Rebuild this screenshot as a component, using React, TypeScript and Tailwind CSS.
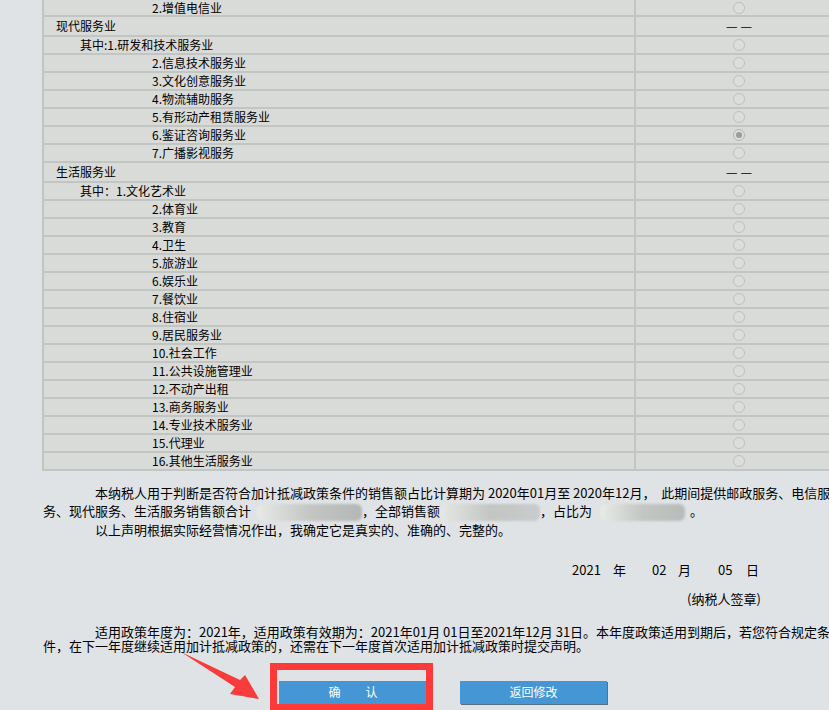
import React from "react";

type Row = { label: string; kind: "first" | "cat" | "sub" | "item"; checked?: boolean };

const rows: Row[] = [
  { label: "2.增值电信业", kind: "first" },
  { label: "现代服务业", kind: "cat" },
  { label: "其中:1.研发和技术服务业", kind: "sub" },
  { label: "2.信息技术服务业", kind: "item" },
  { label: "3.文化创意服务业", kind: "item" },
  { label: "4.物流辅助服务", kind: "item" },
  { label: "5.有形动产租赁服务业", kind: "item" },
  { label: "6.鉴证咨询服务业", kind: "item", checked: true },
  { label: "7.广播影视服务", kind: "item" },
  { label: "生活服务业", kind: "cat" },
  { label: "其中：1.文化艺术业", kind: "sub" },
  { label: "2.体育业", kind: "item" },
  { label: "3.教育", kind: "item" },
  { label: "4.卫生", kind: "item" },
  { label: "5.旅游业", kind: "item" },
  { label: "6.娱乐业", kind: "item" },
  { label: "7.餐饮业", kind: "item" },
  { label: "8.住宿业", kind: "item" },
  { label: "9.居民服务业", kind: "item" },
  { label: "10.社会工作", kind: "item" },
  { label: "11.公共设施管理业", kind: "item" },
  { label: "12.不动产出租", kind: "item" },
  { label: "13.商务服务业", kind: "item" },
  { label: "14.专业技术服务业", kind: "item" },
  { label: "15.代理业", kind: "item" },
  { label: "16.其他生活服务业", kind: "item" },
];

// heights include the 2px bottom rule (border-box)
const heights = { first: "h-[17px]", cat: "h-[20px]", sub: "h-[18px]", item: "h-[18px]" };
const indents = { first: "pl-[108px]", cat: "pl-[12px]", sub: "pl-[36px]", item: "pl-[108px]" };

function Radio({ checked }: { checked?: boolean }) {
  return (
    <span
      className={`flex items-center justify-center w-[12px] h-[12px] rounded-full border bg-[#dcdedb] ${
        checked ? "border-[#b3b4b2]" : "border-[#bfc0be]"
      }`}
    >
      {checked && <span className="w-[6px] h-[6px] rounded-full bg-[#9a9b9a]" />}
    </span>
  );
}

function Blur({ w, from, to }: { w: string; from: string; to: string }) {
  return (
    <span className={`inline-block align-middle h-[17px] ${w} rounded-md blur-[1px] bg-linear-to-r ${from} via-[#c4c6c4] ${to}`} />
  );
}

export default function App() {
  return (
    <div
      className="relative w-[829px] h-[710px] overflow-hidden bg-[#dfe3e6] text-black"
      style={{ fontFamily: '"Noto Sans CJK SC", "Noto Sans", sans-serif' }}
    >
      <div className="w-[900px] pl-[42px]">
        {/* industry table */}
        <div className="w-[800px] border-l-2 border-[#c3c5c2] bg-[#d9dbd8] text-[12px]">
          {rows.map((r) => (
            <div key={r.label} className={`flex border-b-2 border-[#c3c5c2] ${heights[r.kind]}`}>
              <div className={`w-[592px] border-r-2 border-[#c3c5c2] flex items-center leading-none whitespace-nowrap ${indents[r.kind]}`}>
                {r.label}
              </div>
              <div className="flex-1 flex items-center justify-center">
                {r.kind === "cat" ? (
                  <span className="flex gap-[3px] text-[13px] leading-none pb-[2px]">
                    <span>—</span>
                    <span>—</span>
                  </span>
                ) : (
                  <Radio checked={r.checked} />
                )}
              </div>
            </div>
          ))}
        </div>

        {/* declaration */}
        <div className="mt-[13px] text-[13px] leading-[18px] whitespace-nowrap">
          <div className="pl-[53px]">
            本纳税人用于判断是否符合加计抵减政策条件的销售额占比计算期为 2020年01月至 2020年12月，&nbsp;&nbsp;此期间提供邮政服务、电信服务、
          </div>
          <div className="pl-px flex items-center">
            <span>务、现代服务、生活服务销售额合计</span>
            <span className="ml-[6px]"><Blur w="w-[105px]" from="from-[#e7eae7]" to="to-[#b5b7b6]" /></span>
            <span>，全部销售额</span>
            <span><Blur w="w-[100px]" from="from-[#e6e8e5]" to="to-[#c9cbcd]" /></span>
            <span>，占比为</span>
            <span className="ml-[8px]"><Blur w="w-[85px]" from="from-[#e8ebe7]" to="to-[#b9bbb9]" /></span>
            <span className="ml-[5px]">。</span>
          </div>
          <div className="pl-[53px]">以上声明根据实际经营情况作出，我确定它是真实的、准确的、完整的。</div>
        </div>

        {/* date */}
        <div className="mt-[22px] pl-[530px] flex text-[13px] leading-[18px]">
          <span className="w-[41px]">2021</span>
          <span className="w-[39px]">年</span>
          <span className="w-[26px]">02</span>
          <span className="w-[40px]">月</span>
          <span className="w-[28px]">05</span>
          <span>日</span>
        </div>
        <div className="mt-[11px] pl-[645px] text-[13px] leading-[18px]">(纳税人签章)</div>

        {/* policy */}
        <div className="mt-[17px] text-[13px] leading-[14px] whitespace-nowrap">
          <div className="pl-[53px]">
            适用政策年度为：2021年，适用政策有效期为：2021年01月 01日至2021年12月 31日。本年度政策适用到期后，若您符合规定条
          </div>
          <div className="pl-px">件，在下一年度继续适用加计抵减政策的，还需在下一年度首次适用加计抵减政策时提交声明。</div>
        </div>

        {/* buttons */}
        <div className="mt-[28px] pl-[237px] flex gap-[33px] text-[12px] text-white">
          <div className="relative">
            <button className="w-[148px] h-[23px] bg-[#4497d4] shadow-[1px_1px_0_0_#5c6f7e] flex items-center justify-center gap-[25px]">
              <span>确</span>
              <span>认</span>
            </button>
            <div className="absolute left-[-9px] top-[-18px] w-[163px] h-[48px] border-[7px] border-[#fd3a3a]" />
          </div>
          <button className="w-[147px] h-[23px] bg-[#4497d4] shadow-[1px_1px_0_0_#5c6f7e] flex items-center justify-center">
            返回修改
          </button>
        </div>
      </div>

      {/* annotation arrow */}
      <svg className="absolute left-0 top-0 pointer-events-none" width="829" height="710" viewBox="0 0 829 710">
        <polygon points="181,652 240,680 245,675 259,699 230,694 235,687" fill="#f83b3b" />
      </svg>
    </div>
  );
}
